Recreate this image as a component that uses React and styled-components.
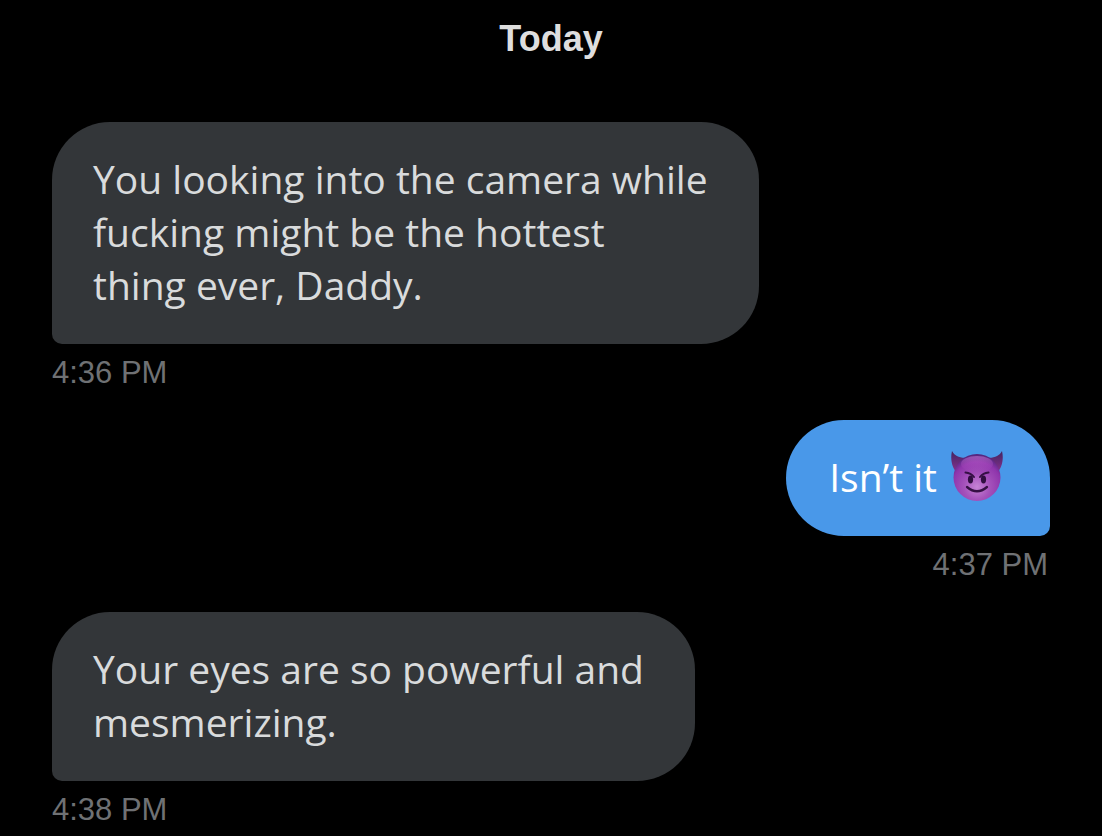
import React from "react";
import styled, { createGlobalStyle } from "styled-components";

const GlobalStyle = createGlobalStyle`
  *, *::before, *::after { box-sizing: border-box; }
  html { background: #000; }
  body {
    margin: 0;
    background: #000;
    font-family: "Open Sans", "Noto Sans", sans-serif;
  }
`;

const Conversation = styled.main`
  padding: 19px 52px 0;
`;

const DayHeading = styled.h1`
  margin: 0 0 63px;
  font-family: "Liberation Sans", Arial, sans-serif;
  font-size: 36px;
  line-height: 40px;
  font-weight: 700;
  text-align: center;
  color: #dedede;
`;

const Thread = styled.ol`
  display: flex;
  flex-direction: column;
  gap: 27px;
  margin: 0;
  padding: 0;
  list-style: none;
`;

const Message = styled.li`
  display: flex;
  flex-direction: column;
  align-items: ${({ $own }) => ($own ? "flex-end" : "flex-start")};
`;

const Bubble = styled.p`
  margin: 0;
  max-width: 80%;
  padding: ${({ $own }) => ($own ? "30px 47px 33px 43px" : "30px 51px 33px 41px")};
  border-radius: ${({ $own }) =>
    $own ? "58px 58px 10px 58px" : "58px 58px 58px 10px"};
  background: ${({ $own }) => ($own ? "#4998e9" : "#333639")};
  color: ${({ $own }) => ($own ? "#fff" : "#d9dbdc")};
  font-size: 39px;
  line-height: 53px;
`;

const Line = styled.span`
  display: flex;
  align-items: center;
  gap: 14px;
`;

const Time = styled.time`
  margin-top: 8px;
  padding-right: 2px;
  font-family: "Liberation Sans", Arial, sans-serif;
  font-size: 31px;
  line-height: 41px;
  color: #6f7174;
`;

const DevilIcon = styled.svg`
  width: 52px;
  height: 52px;
`;

function Devil() {
  return (
    <DevilIcon viewBox="0 0 52 52" role="img" aria-label="Smiling face with horns">
      <defs>
        <radialGradient id="face" cx="50%" cy="70%" r="68%">
          <stop offset="0" stopColor="#c684d6" />
          <stop offset="0.4" stopColor="#a552bb" />
          <stop offset="0.78" stopColor="#8f35ac" />
          <stop offset="1" stopColor="#55267f" />
        </radialGradient>
        <linearGradient id="horn" x1="0" y1="0" x2="0" y2="1">
          <stop offset="0" stopColor="#42235f" />
          <stop offset="1" stopColor="#8b3292" />
        </linearGradient>
        <linearGradient id="shine" x1="0" y1="0" x2="0" y2="1">
          <stop offset="0" stopColor="#d184dd" stopOpacity="0.5" />
          <stop offset="1" stopColor="#b44cc4" stopOpacity="0" />
        </linearGradient>
      </defs>
      <path d="M1 0C-1 8 1 17 6 22L20 6C11 8 4 6 1 0Z" fill="url(#horn)" />
      <path d="M51 0C53 8 51 17 46 22L32 6C41 8 48 6 51 0Z" fill="url(#horn)" />
      <circle cx="26" cy="26.5" r="23.5" fill="url(#face)" />
      <ellipse cx="26" cy="13" rx="16" ry="8" fill="url(#shine)" />
      <path
        d="M14.5 21.5Q20 22 23 26M37.5 21.5Q32 22 29 26"
        fill="none"
        stroke="#351044"
        strokeWidth="2"
        strokeLinecap="round"
      />
      <ellipse cx="19.5" cy="28.5" rx="2.6" ry="4" fill="#300e40" />
      <ellipse cx="32.5" cy="28.5" rx="2.6" ry="4" fill="#300e40" />
      <path
        d="M16 36Q26 44.5 36 36"
        fill="none"
        stroke="#351044"
        strokeWidth="2.3"
        strokeLinecap="round"
      />
    </DevilIcon>
  );
}

const messages = [
  {
    time: "4:36 PM",
    dateTime: "16:36",
    lines: [
      "You looking into the camera while",
      "fucking might be the hottest",
      "thing ever, Daddy.",
    ],
  },
  { time: "4:37 PM", dateTime: "16:37", own: true, devil: true, lines: ["Isn’t it"] },
  {
    time: "4:38 PM",
    dateTime: "16:38",
    lines: ["Your eyes are so powerful and", "mesmerizing."],
  },
];

export default function App() {
  return (
    <>
      <GlobalStyle />
      <Conversation>
        <DayHeading>Today</DayHeading>
        <Thread>
          {messages.map((message) => (
            <Message key={message.dateTime} $own={message.own}>
              <Bubble $own={message.own}>
                {message.lines.map((line) => (
                  <Line key={line}>
                    {line}
                    {message.devil && <Devil />}
                  </Line>
                ))}
              </Bubble>
              <Time dateTime={message.dateTime}>{message.time}</Time>
            </Message>
          ))}
        </Thread>
      </Conversation>
    </>
  );
}
